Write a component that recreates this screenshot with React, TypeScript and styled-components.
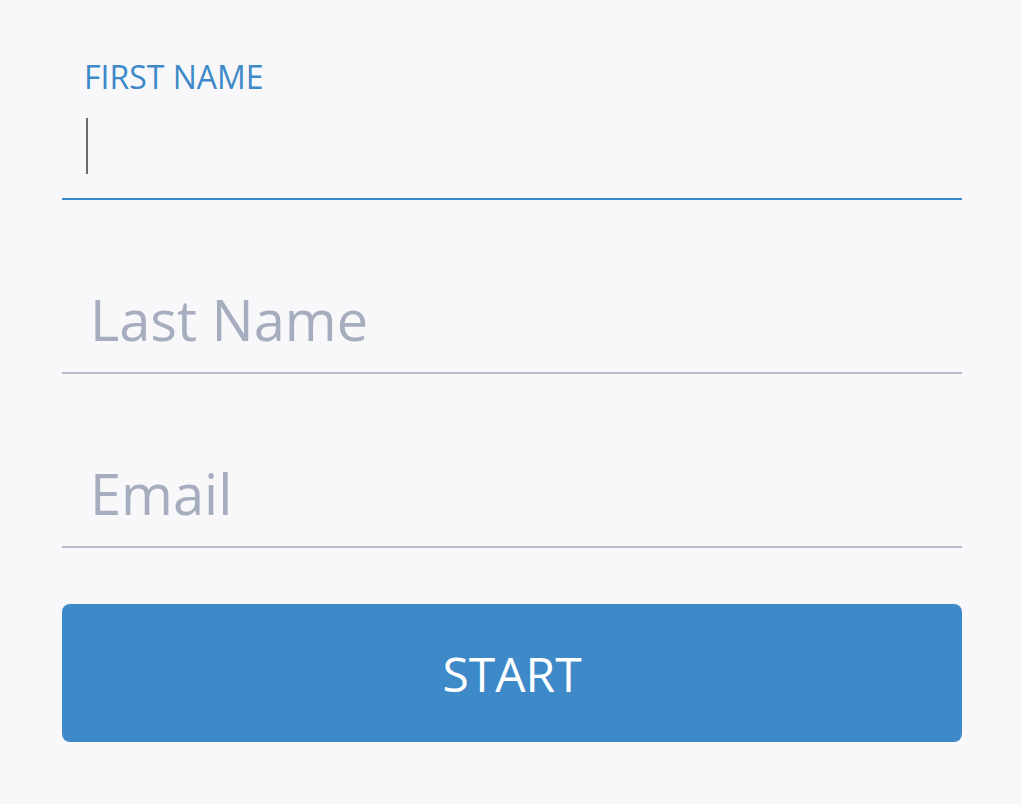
import React from 'react'
import styled, { createGlobalStyle } from 'styled-components'

const GlobalStyle = createGlobalStyle`
    html, body {
        margin: 0;
        padding: 0;
        background: #f8f8fa;
    }
    body {
        font-family: 'Open Sans', 'Liberation Sans', sans-serif;
    }
    * {
        box-sizing: border-box;
    }
`

const blue = '#3e89c8'

type FieldProps = {
    label?: string
    placeholder?: string
    active?: boolean
}

const Field: React.FC<FieldProps> = (props) => {
    const { label, placeholder, active } = props

    return (
        <FieldWrapper $active={active}>
            {active && label && <FieldLabel>{label}</FieldLabel>}
            <InputWrap>
                <FieldInput type="text" placeholder={active ? '' : placeholder} />
                {active && <Caret />}
            </InputWrap>
        </FieldWrapper>
    )
}

export default function App() {
    return (
        <>
            <GlobalStyle />
            <Page>
                <Form onSubmit={(e) => e.preventDefault()}>
                    <Field label="FIRST NAME" placeholder="First Name" active />
                    <Field placeholder="Last Name" />
                    <Field placeholder="Email" />
                    <StartButton type="submit">START</StartButton>
                </Form>
            </Page>
        </>
    )
}

const Page = styled.div`
    width: 1022px;
    height: 804px;
    padding: 26px 60px 0 62px;
    background: #f8f8fa;
`
const Form = styled.form`
    width: 900px;
    display: flex;
    flex-direction: column;
`
const FieldWrapper = styled.div<{ $active?: boolean }>`
    height: 174px;
    display: flex;
    flex-direction: column;
    justify-content: flex-end;
    border-bottom: 2px solid ${(p) => (p.$active ? blue : '#b6bccb')};
`
const FieldLabel = styled.label`
    display: block;
    padding-left: 22px;
    margin-bottom: 9px;
    font-size: 32px;
    line-height: 42px;
    color: ${blue};
`
const InputWrap = styled.div`
    position: relative;
    margin-bottom: 15px;
`
const FieldInput = styled.input`
    display: block;
    width: 100%;
    height: 76px;
    padding: 0 24px 0 28px;
    border: none;
    outline: none;
    background: transparent;
    font-family: 'Open Sans', 'Liberation Sans', sans-serif;
    font-size: 56px;
    color: #333;

    &::placeholder {
        color: #a5adbf;
        opacity: 1;
    }
`
const Caret = styled.span`
    position: absolute;
    left: 24px;
    top: 11px;
    width: 2px;
    height: 56px;
    background: #6b6b6b;
`
const StartButton = styled.button`
    margin-top: 56px;
    height: 138px;
    border: none;
    border-radius: 8px;
    background: ${blue};
    color: #ffffff;
    font-family: 'Open Sans', 'Liberation Sans', sans-serif;
    font-size: 48px;
    cursor: pointer;
    display: flex;
    align-items: center;
    justify-content: center;
`
